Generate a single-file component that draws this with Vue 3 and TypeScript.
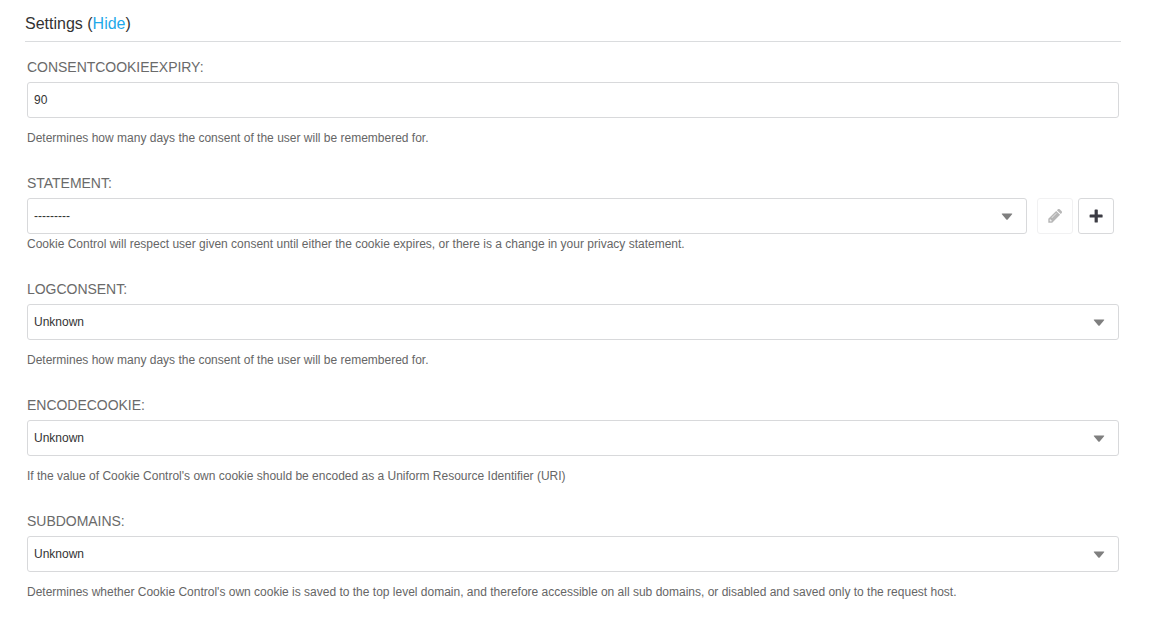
<script setup lang="ts">
import { ref } from 'vue'

interface Field {
  name: string
  kind: 'text' | 'select'
  value: string
  help: string
  related?: boolean
}

const open = ref(true)

const fields = ref<Field[]>([
  {
    name: 'consentCookieExpiry',
    kind: 'text',
    value: '90',
    help: 'Determines how many days the consent of the user will be remembered for.',
  },
  {
    name: 'statement',
    kind: 'select',
    value: '---------',
    related: true,
    help: 'Cookie Control will respect user given consent until either the cookie expires, or there is a change in your privacy statement.',
  },
  {
    name: 'logConsent',
    kind: 'select',
    value: 'Unknown',
    help: 'Determines how many days the consent of the user will be remembered for.',
  },
  {
    name: 'encodeCookie',
    kind: 'select',
    value: 'Unknown',
    help: "If the value of Cookie Control's own cookie should be encoded as a Uniform Resource Identifier (URI)",
  },
  {
    name: 'subDomains',
    kind: 'select',
    value: 'Unknown',
    help: "Determines whether Cookie Control's own cookie is saved to the top level domain, and therefore accessible on all sub domains, or disabled and saved only to the request host.",
  },
])
</script>

<template>
  <section class="fieldset">
    <h2 class="title">
      Settings (<a class="toggle" href="#" @click.prevent="open = !open">{{ open ? 'Hide' : 'Show' }}</a>)
    </h2>
    <div v-if="open" class="fields">
      <div v-for="f in fields" :key="f.name" class="field" :class="{ related: f.related }">
        <label class="label" :for="f.name">{{ f.name.toUpperCase() }}:</label>
        <div class="row">
          <input v-if="f.kind === 'text'" :id="f.name" v-model="f.value" class="control" type="text" />
          <div v-else class="select">
            <select :id="f.name" v-model="f.value" class="control">
              <option :value="f.value">{{ f.value }}</option>
            </select>
            <svg class="caret" width="12" height="8" viewBox="0 0 12 8" aria-hidden="true">
              <path d="M1.3 .5h9.4q1 0 .4.8L6.7 6.4q-.7.7-1.4 0L.9 1.3q-.6-.8.4-.8z" fill="#7f7f7f" />
            </svg>
          </div>
          <div v-if="f.related" class="actions">
            <button class="action" type="button" disabled>
              <svg width="14" height="14" viewBox="0 0 14 14" aria-hidden="true">
                <path
                  fill="#333"
                  fill-rule="evenodd"
                  d="M8.2 1.9l3.9 3.9-7.9 7.9H.3V9.8zM1.5 10.9v.7h.9v.9h.7l.7-.7-1.6-1.6zM8.3 3.9L3.6 8.6l.3.3 4.7-4.7zM8.9 1.2L9.9.3q.9-.7 1.8 0l2 2q.6.9 0 1.8l-.9 1z"
                />
              </svg>
            </button>
            <button class="action" type="button">
              <svg width="14" height="14" viewBox="0 0 14 14" aria-hidden="true">
                <path
                  fill="#3c3c44"
                  d="M6.3.4h1.8q.7 0 .7.7v4.3h4.1q.7 0 .7.7v1.8q0 .7-.7.7H8.8v4.3q0 .7-.7.7H6.3q-.7 0-.7-.7V8.6H1.3q-.7 0-.7-.7V6.1q0-.7.7-.7h4.3V1.1q0-.7.7-.7z"
                />
              </svg>
            </button>
          </div>
        </div>
        <p class="help">{{ f.help }}</p>
      </div>
    </div>
  </section>
</template>

<style>
body {
  background: #fff;
}
</style>

<style scoped>
.fieldset {
  box-sizing: border-box;
  height: 627px;
  padding: 14px 36px 0 25px;
  overflow: hidden;
  font-family: 'Liberation Sans', Arial, sans-serif;
}
.title {
  margin: 0;
  height: 27px;
  border-bottom: 1px solid #dadcde;
  font-size: 16px;
  font-weight: 400;
  line-height: 20px;
  color: #333;
}
.toggle {
  color: #1fa9ea;
  text-decoration: none;
}
.fields {
  display: flex;
  flex-direction: column;
  gap: 27px;
  padding: 15px 2px 0;
}
.label {
  display: block;
  margin-bottom: 5px;
  font-size: 14px;
  line-height: 20px;
  letter-spacing: -0.03px;
  color: #6a6a6a;
}
.row {
  display: flex;
}
.select {
  position: relative;
  flex: 1;
}
.control {
  display: block;
  box-sizing: border-box;
  width: 100%;
  height: 36px;
  margin: 0;
  padding: 0 6px;
  border: 1px solid #d8d9db;
  border-radius: 3px;
  outline: none;
  background: #fff;
  font: 12px/18px 'Liberation Sans', Arial, sans-serif;
  color: #333;
  appearance: none;
}
.caret {
  position: absolute;
  top: 15px;
  right: 14px;
  pointer-events: none;
}
.actions {
  display: flex;
  gap: 5px;
  padding: 0 5px 0 10px;
}
.action {
  display: flex;
  align-items: center;
  justify-content: center;
  box-sizing: border-box;
  width: 36px;
  height: 36px;
  padding: 0;
  border: 1px solid #d8d9db;
  border-radius: 3px;
  background: #fff;
}
.action:disabled {
  opacity: 0.35;
}
.help {
  margin: 12px 0 0;
  font-size: 12px;
  line-height: 16px;
  color: #666;
}
.related .help {
  margin-top: 2px;
}
</style>
